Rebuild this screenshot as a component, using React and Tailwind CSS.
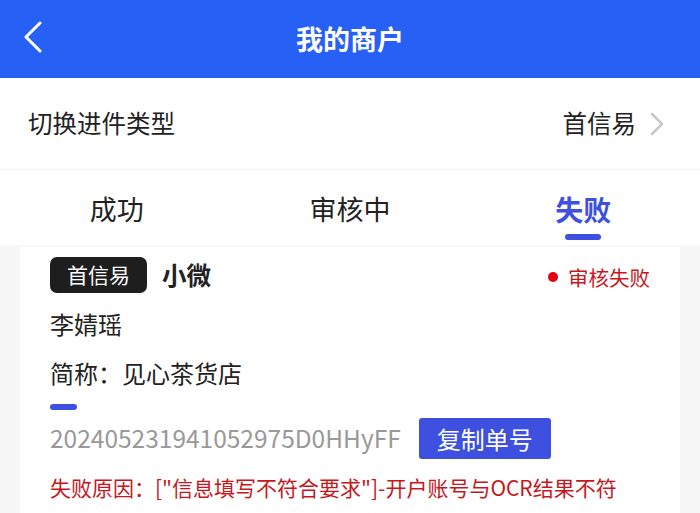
import React from "react";

const font = { fontFamily: '"Noto Sans CJK SC", "Noto Sans", sans-serif' };

export default function App() {
  const tabs = ["成功", "审核中", "失败"];
  const active = 2;

  return (
    <div className="w-[700px] h-[513px] overflow-hidden bg-[#f7f7f7]" style={font}>
      <header className="relative h-[78px] bg-[#2760f4] flex items-center justify-center">
        <svg className="absolute left-[22px] top-[21px]" width="22" height="32" viewBox="0 0 22 32">
          <path d="M18 2 L4 16 L18 30" fill="none" stroke="#fff" strokeWidth="3" strokeLinecap="round" strokeLinejoin="round" />
        </svg>
        <h1 className="text-white text-[27px] font-bold">我的商户</h1>
      </header>

      <div className="h-[92px] bg-white flex items-center justify-between pl-[28px] pr-[36px] border-b border-[#f1f1f1]">
        <span className="text-[24.5px] text-[#222]">切换进件类型</span>
        <div className="flex items-center gap-[14px]">
          <span className="text-[24.5px] text-[#222]">首信易</span>
          <svg width="14" height="24" viewBox="0 0 14 24">
            <path d="M2 2 L12 12 L2 22" fill="none" stroke="#c8c8c8" strokeWidth="2.5" strokeLinecap="round" strokeLinejoin="round" />
          </svg>
        </div>
      </div>

      <div className="h-[75px] bg-white grid grid-cols-3">
        {tabs.map((t, i) => (
          <div key={t} className="relative flex items-center justify-center pt-[3px]">
            <span className={i === active ? "text-[28px] font-bold text-[#3d50df]" : "text-[27px] text-[#222]"}>{t}</span>
            {i === active && <span className="absolute bottom-[5px] w-[36px] h-[6px] rounded-full bg-[#3d50df]" />}
          </div>
        ))}
      </div>

      <div className="mx-[20px] mt-[2px] bg-white pl-[30px] pr-[30px] pt-[9px] pb-[20px]">
        <div className="flex items-center justify-between h-[38px]">
          <div className="flex items-center gap-[15px]">
            <span className="w-[97px] h-[36px] rounded-[7px] bg-[#1e1e1e] text-white text-[21px] flex items-center justify-center">首信易</span>
            <span className="text-[24.5px] font-bold text-[#222]">小微</span>
          </div>
          <div className="flex items-center gap-[10px] mt-[4px]">
            <span className="w-[10px] h-[10px] rounded-full bg-[#e60012]" />
            <span className="text-[20.5px] text-[#c8161d]">审核失败</span>
          </div>
        </div>
        <p className="text-[24px] text-[#222] mt-[14px] leading-[32px]">李婧瑶</p>
        <p className="text-[24px] text-[#222] mt-[17px] leading-[32px]">简称：见心茶货店</p>
        <span className="block mt-[15px] w-[27px] h-[6px] rounded-full bg-[#3d50df]" />
        <div className="flex items-center gap-[18px] mt-[8px]">
          <span className="text-[24.5px] text-[#999]">202405231941052975D0HHyFF</span>
          <button className="w-[132px] h-[41px] rounded-[3px] bg-[#3d50df] text-white text-[24px] flex items-center justify-center">复制单号</button>
        </div>
        <p className="text-[21px] text-[#c8161d] mt-[14px] leading-[28px] whitespace-nowrap">失败原因：["信息填写不符合要求"]-开户账号与OCR结果不符</p>
      </div>
    </div>
  );
}
